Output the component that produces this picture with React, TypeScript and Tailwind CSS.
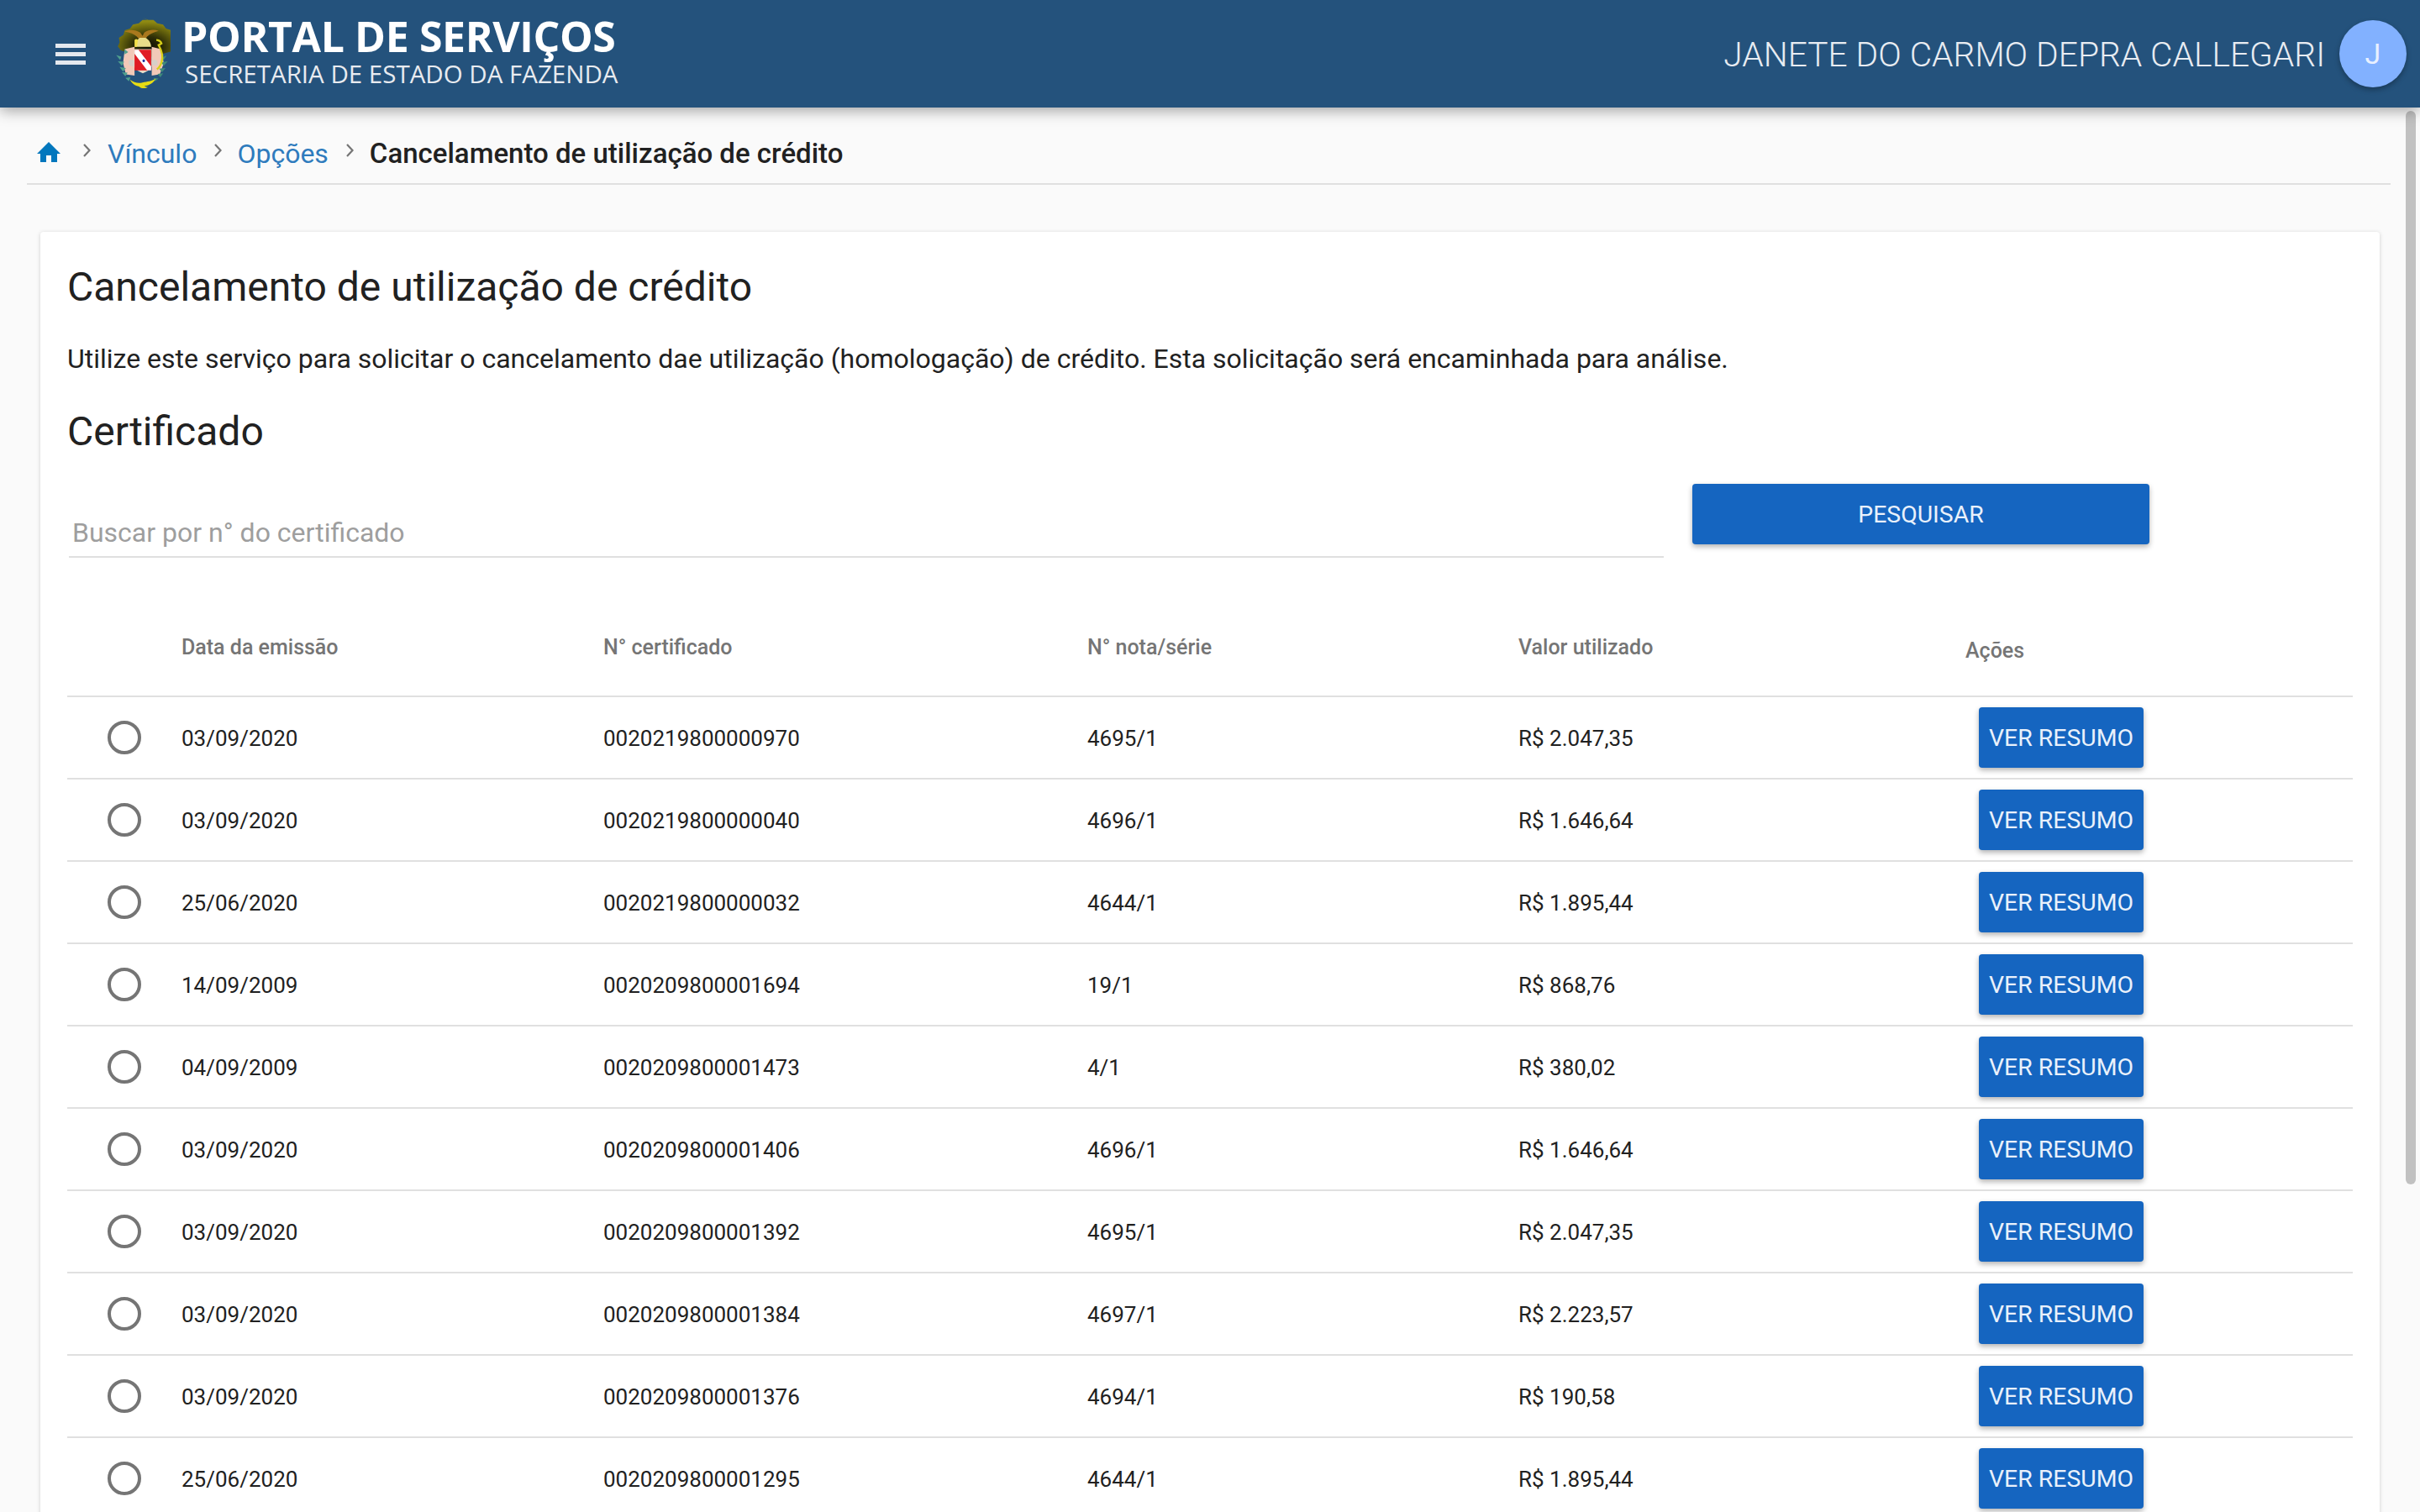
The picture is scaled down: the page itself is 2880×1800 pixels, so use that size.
import React from "react";

const rows = [
  ["03/09/2020", "0020219800000970", "4695/1", "R$ 2.047,35"],
  ["03/09/2020", "0020219800000040", "4696/1", "R$ 1.646,64"],
  ["25/06/2020", "0020219800000032", "4644/1", "R$ 1.895,44"],
  ["14/09/2009", "0020209800001694", "19/1", "R$ 868,76"],
  ["04/09/2009", "0020209800001473", "4/1", "R$ 380,02"],
  ["03/09/2020", "0020209800001406", "4696/1", "R$ 1.646,64"],
  ["03/09/2020", "0020209800001392", "4695/1", "R$ 2.047,35"],
  ["03/09/2020", "0020209800001384", "4697/1", "R$ 2.223,57"],
  ["03/09/2020", "0020209800001376", "4694/1", "R$ 190,58"],
  ["25/06/2020", "0020209800001295", "4644/1", "R$ 1.895,44"],
];

function Crest() {
  return (
    <svg width="66" height="84" viewBox="53 40 192 246" className="shrink-0">
      <defs>
        <radialGradient id="g" cx="50%" cy="72%" r="62%">
          <stop offset="0%" stopColor="#0c0c02" />
          <stop offset="40%" stopColor="#2e2e06" />
          <stop offset="100%" stopColor="#8f8a12" />
        </radialGradient>
      </defs>
      <path transform="translate(149 0) scale(1.28 1) translate(-149 0)" d="M148 40l14 8 16 0 10 12 16 4 8 14 14 6 4 16 12 10-2 16 5 14-8 14-74 26-74-26-8-14 5-14-2-16 12-10 4-16 14-6 8-14 16-4 10-12 16 0z" fill="url(#g)" />
      <path d="M85 88c20-8 38-6 55 4l8 12 6-12c14-10 34-12 50-6-16 4-30 10-40 20l-10 14h-14l-12-14c-10-10-24-14-43-18z" fill="#a9781d" />
      <path d="M122 142c0-16 10-28 16-32l20 0c12 6 20 18 20 32z" fill="#e8dc8a" />
      <path d="M120 118c4-4 8-4 12 0l-4 24h-8z" fill="#f4e04a" />
      <path d="M86 150l34-8v100l-30-4-10-40z" fill="#f2c9b8" />
      <path d="M212 150l-32-8v100l28-4 14-40z" fill="#f2c9b8" />
      <path d="M100 190c8-6 16-4 20 2v16c-8 4-16 2-20-6z" fill="#d8d0c8" />
      <path d="M180 190c8-6 16-4 20 2v14c-8 4-16 2-20-6z" fill="#d8d0c8" />
      <g fill="#4fa08e">
        <path d="M56 170l18 6-4 12z" />
        <path d="M62 192l22 2-8 14z" />
        <path d="M68 212l22 4-10 12z" />
        <path d="M76 230l20 2-8 12z" />
        <path d="M84 150l14 10-12 8z" />
        <path d="M88 250l18-2-6 14z" />
      </g>
      <g fill="#3f8a7a">
        <path d="M232 172l-18 8 6 10z" />
        <path d="M236 192l-24 4 10 12z" />
        <path d="M228 216l-22 2 10 12z" />
        <path d="M220 234l-20 2 10 12z" />
        <path d="M204 252l-18-2 6 12z" />
      </g>
      <path d="M196 118c6 0 16 4 18 12l-10 6c8 14 18 36 10 60-4 14-10 20-16 24" fill="none" stroke="#d8d018" strokeWidth="7" />
      <path d="M104 256c14 10 28 14 44 10 18-4 30-4 46-14-6 14-22 24-40 26 6 4 10 4 12 4-10 6-24 6-30-2-14-2-26-12-32-24z" fill="#e6dc14" />
      <path d="M118 150h62v56c0 12-14 20-31 28-17-8-31-16-31-28z" fill="#e8dcc8" />
      <rect x="120" y="152" width="58" height="72" fill="#e01c24" />
      <path d="M120 166l0-14 14 0 44 58 0 14-14 0z" fill="#fff" />
      <path d="M150 186l4 0 3 4-3 5-4 0-3-5z" fill="#2030a0" />
    </svg>
  );
}

function Home() {
  return (
    <svg width="28" height="24" viewBox="0 0 28 24" className="shrink-0">
      <path d="M14 0L0 14h4v10h7v-8h6v8h7V14h4z" fill="#0277bd" />
    </svg>
  );
}

function Chevron() {
  return (
    <svg width="12" height="18" viewBox="0 0 12 18" className="shrink-0">
      <path d="M2 2l6.5 7L2 16" fill="none" stroke="#757575" strokeWidth="2.2" />
    </svg>
  );
}

export default function App() {
  return (
    <div className="relative h-[1800px] w-[2880px] overflow-hidden bg-[#fafafa] font-['Roboto',sans-serif] text-[#212121]">
      <header className="relative z-10 flex h-[128px] items-center bg-[#24527c] pl-[66px] pr-4 shadow-[0_4px_16px_rgba(0,0,0,0.35)]">
        <div className="flex w-[36px] flex-col gap-[5px]">
          <div className="h-[5px] bg-[#e4e8ee]" />
          <div className="h-[5px] bg-[#e4e8ee]" />
          <div className="h-[5px] bg-[#e4e8ee]" />
        </div>
        <div className="ml-[35px] mt-[-2px]">
          <Crest />
        </div>
        <div className="ml-[13px] mt-[-4px] flex flex-col font-['Open_Sans',sans-serif]">
          <span className="mt-[-3px] text-[50px] font-bold leading-[50px] tracking-[-0.4px] text-white">PORTAL DE SERVIÇOS</span>
          <span className="ml-[4px] mt-[4px] text-[29.5px] leading-[32px] text-[#e8ebf0]">SECRETARIA DE ESTADO DA FAZENDA</span>
        </div>
        <span className="ml-auto mt-[3px] text-[40.7px] font-light text-[#e8ecf2]">JANETE DO CARMO DEPRA CALLEGARI</span>
        <div className="ml-[17px] flex h-[80px] w-[80px] items-center justify-center rounded-full bg-[#82b1ff] text-[34px] text-[#e8f0ff] shadow-[0_3px_6px_rgba(0,0,0,0.3)]">
          J
        </div>
      </header>

      <div className="absolute right-[5px] top-[132px] h-[1278px] w-[12px] rounded-full bg-[#c1c1c1]" />

      <main className="pl-[32px] pr-[35px]">
        <nav className="flex h-[92px] items-center border-b-2 border-[#e0e0e0] pl-[12px] pt-[18px] text-[32px]">
          <span className="mt-[-3px]"><Home /></span>
          <span className="ml-[26px] mt-[-6px]"><Chevron /></span>
          <span className="ml-[18px] mt-[1px] text-[#2e7bbd]">Vínculo</span>
          <span className="ml-[20px] mt-[-6px]"><Chevron /></span>
          <span className="ml-[16px] mt-[1px] text-[#2e7bbd]">Opções</span>
          <span className="ml-[20px] mt-[-6px]"><Chevron /></span>
          <span className="ml-[17px] mt-[1px] text-[33px] font-medium text-[#212121]">Cancelamento de utilização de crédito</span>
        </nav>

        <section className="ml-[16px] mr-[13px] mt-[56px] h-[1600px] rounded-[4px] bg-white px-[32px] pt-[34px] shadow-[0_1px_5px_rgba(0,0,0,0.18)]">
          <h1 className="text-[48px] font-normal leading-[64px]">Cancelamento de utilização de crédito</h1>
          <p className="mt-[29px] text-[32px] leading-[48px]">
            Utilize este serviço para solicitar o cancelamento dae utilização (homologação) de crédito. Esta solicitação será encaminhada para análise.
          </p>
          <h2 className="mt-[31px] text-[48px] font-normal leading-[64px]">Certificado</h2>

          <div className="mt-[30px] flex items-start">
            <div className="ml-[2px] flex h-[88px] w-[1898px] items-end border-b-2 border-[#e0e0e0] pb-[6px] pl-[4px] text-[32px] leading-[44px] text-[#9e9e9e]">
              Buscar por n° do certificado
            </div>
            <button className="ml-[34px] flex h-[72px] w-[544px] items-center justify-center rounded-[4px] bg-[#1565c0] pt-[2px] text-[28.4px] text-[#e9f1fb] shadow-[0_3px_6px_rgba(0,0,0,0.3)]">
              PESQUISAR
            </button>
          </div>

          <div className="mt-[93px] grid grid-cols-[136px_502px_576px_513px_532px_1fr] border-b-2 border-[#e0e0e0] pb-[39px] text-[25px] font-medium leading-[28px] text-[#757575]">
            <div />
            <div>Data da emissão</div>
            <div>N° certificado</div>
            <div>N° nota/série</div>
            <div>Valor utilizado</div>
            <div className="mt-[4px] h-[28px]">Ações</div>
          </div>

          {rows.map((r, i) => (
            <div
              key={i}
              className="grid h-[98px] grid-cols-[136px_502px_576px_513px_532px_1fr] items-center border-b-2 border-[#e0e0e0] text-[26px]"
            >
              <div className="pl-[48px]">
                <div className="h-[40px] w-[40px] rounded-full border-[4px] border-[#757575]" />
              </div>
              <div className="pt-[2px]">{r[0]}</div>
              <div className="pt-[2px]">{r[1]}</div>
              <div className="pt-[2px]">{r[2]}</div>
              <div className="pt-[2px]">{r[3]}</div>
              <div className="pl-[16px]">
                <button className="flex h-[72px] w-[196px] items-center justify-center rounded-[4px] bg-[#1565c0] pt-[2px] text-[28.4px] text-[#e9f1fb] shadow-[0_3px_6px_rgba(0,0,0,0.3)]">
                  VER RESUMO
                </button>
              </div>
            </div>
          ))}
        </section>
      </main>
    </div>
  );
}
